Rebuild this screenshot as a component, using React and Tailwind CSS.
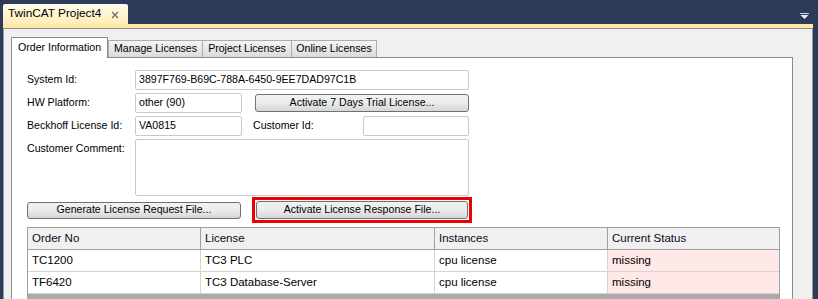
export default function App() {
  const btn =
    "flex items-center justify-center rounded-[3px] border border-[#707070] bg-gradient-to-b from-[#f2f2f2] via-[#ebebeb] to-[#d6d6d6] text-[10.6px] text-black";
  const input = "h-[20px] border border-[#c9c9c9] rounded-[2px] bg-white text-[10.6px] flex items-center pl-[3px]";
  const cols = [
    { w: "w-[173px]", label: "Order No" },
    { w: "w-[234px]", label: "License" },
    { w: "w-[173px]", label: "Instances" },
    { w: "w-[171px]", label: "Current Status" },
  ];
  const rows = [
    ["TC1200", "TC3 PLC", "cpu license", "missing"],
    ["TF6420", "TC3 Database-Server", "cpu license", "missing"],
  ];
  return (
    <div className="w-[818px] h-[299px] overflow-hidden bg-[#293955] bg-[image:repeating-conic-gradient(#30415f_0_25%,#283754_0_50%)] bg-[length:2px_2px] font-['Liberation_Sans',Arial,sans-serif] text-black">
      <div className="h-[24px] flex items-end">
        <div className="ml-[3px] h-[20px] w-[125px] rounded-t-[2px] bg-gradient-to-b from-[#fffcf0] to-[#ffedb2] flex items-center pl-[5px] text-[11.8px] text-black">
          <span>TwinCAT Project4</span>
          <svg width="8" height="8" viewBox="0 0 8 8" className="ml-[10px] mt-px">
            <path d="M1 1L7 7M7 1L1 7" stroke="#6a6a6a" strokeWidth="1.3" />
          </svg>
        </div>
        <div className="ml-auto mr-[9px] self-start mt-[13px]">
          <svg width="9" height="6" viewBox="0 0 9 6">
            <rect x="0" y="0" width="9" height="1" fill="#cfd6e2" />
            <path d="M0.5 2H8.5L4.5 6Z" fill="#e8ecf2" />
          </svg>
        </div>
      </div>
      <div className="ml-[3px] w-[810px] h-[4px] bg-[#ffe8a6]" />
      <div className="ml-[3px] w-[810px] h-px bg-[#8a8a8a]" />
      <div className="ml-[3px] w-[810px] h-[275px] bg-[#f0f0f0] border-l border-r border-[#9a9a9a] pt-[8px] pl-[7px]">
        <div className="flex items-end h-[20px] text-[10.6px]">
          <div className="relative z-10 w-[97px] h-[21px] -mb-px bg-white border border-b-0 border-[#898c95] pl-[6px] pt-[3px] leading-[13px]">
            Order Information
          </div>
          <div className="w-[95px] h-[17px] border border-b-0 border-[#acacac] bg-gradient-to-b from-[#f4f4f4] to-[#dcdcdc] flex items-center justify-center">
            Manage Licenses
          </div>
          <div className="w-[89px] h-[17px] border border-b-0 border-l-0 border-[#acacac] bg-gradient-to-b from-[#f4f4f4] to-[#dcdcdc] flex items-center justify-center">
            Project Licenses
          </div>
          <div className="w-[85px] h-[17px] border border-b-0 border-l-0 border-[#acacac] bg-gradient-to-b from-[#f4f4f4] to-[#dcdcdc] flex items-center justify-center">
            Online Licenses
          </div>
        </div>
        <div className="w-[782px] h-[260px] bg-white border border-[#898c95] pt-[12px] pl-[15px] text-[10.6px]">
          <div className="flex items-center h-[20px]">
            <div className="w-[108px]">System Id:</div>
            <div className={`${input} w-[334px]`}>3897F769-B69C-788A-6450-9EE7DAD97C1B</div>
          </div>
          <div className="flex items-center h-[20px] mt-[3px]">
            <div className="w-[108px]">HW Platform:</div>
            <div className={`${input} w-[107px]`}>other (90)</div>
            <div className={`${btn} ml-[13px] w-[214px] h-[18px]`}>Activate 7 Days Trial License...</div>
          </div>
          <div className="flex items-center h-[20px] mt-[3px]">
            <div className="w-[108px]">Beckhoff License Id:</div>
            <div className={`${input} w-[107px]`}>VA0815</div>
            <div className="ml-[11px] w-[110px]">Customer Id:</div>
            <div className={`${input} w-[106px]`}></div>
          </div>
          <div className="flex mt-[3px]">
            <div className="w-[108px] pt-[2px]">Customer Comment:</div>
            <div className="w-[334px] h-[57px] border border-[#c9c9c9] rounded-[2px] bg-white" />
          </div>
          <div className="flex items-center h-[26px] mt-px">
            <div className={`${btn} w-[214px] h-[17px]`}>Generate License Request File...</div>
            <div className="ml-[11px] w-[220px] h-[26px] border-[3px] border-[#ee0000] p-px">
              <div className={`${btn} w-full h-full`}>Activate License Response File...</div>
            </div>
          </div>
          <div className="mt-[4px] w-[753px] h-[80px] border border-[#a0a0a0] bg-[#ababab] text-[11.5px]">
            <div className="flex h-[22px] bg-[#f0f0f0] border-b border-[#a0a0a0]">
              {cols.map((c, i) => (
                <div
                  key={c.label}
                  className={`${c.w} flex items-center pl-[4px] ${i < 3 ? "border-r border-[#a0a0a0]" : ""} text-[#0a0a1e]`}
                >
                  {c.label}
                </div>
              ))}
            </div>
            {rows.map((r) => (
              <div key={r[0]} className="flex h-[22px] bg-white border-b border-[#d4d4d4]">
                {r.map((v, i) => (
                  <div
                    key={i}
                    className={`${cols[i].w} flex items-center pl-[4px] ${i < 3 ? "border-r border-[#d4d4d4]" : ""} ${i === 3 ? "bg-[#ffe8e8]" : ""}`}
                  >
                    {v}
                  </div>
                ))}
              </div>
            ))}
          </div>
        </div>
      </div>
    </div>
  );
}
